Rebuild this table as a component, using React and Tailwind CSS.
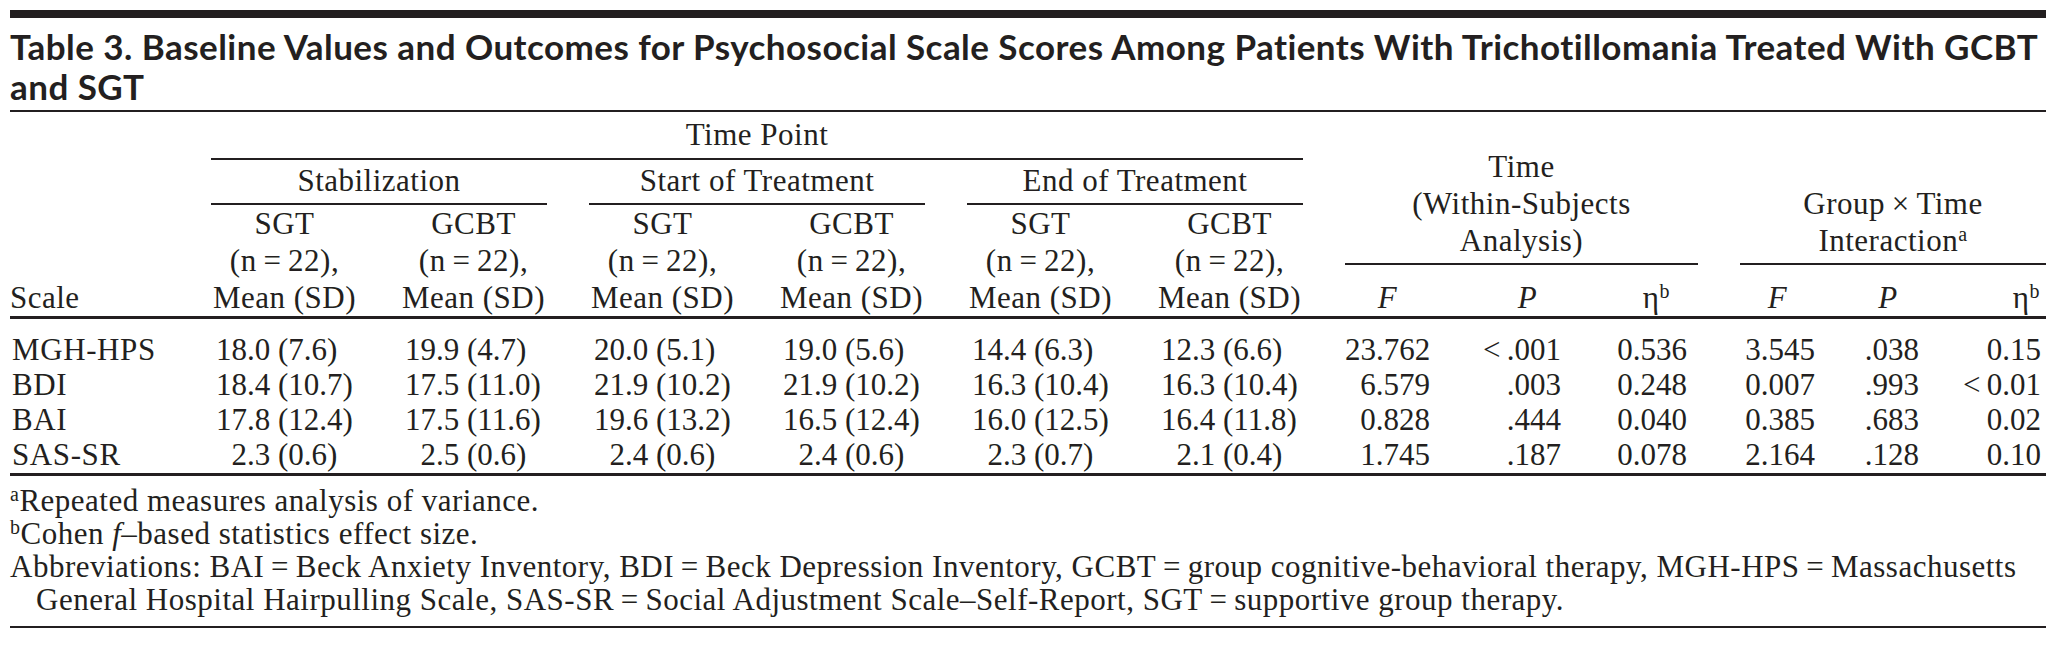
import React from "react";

const INK = "text-[#231f20]";
const GRID =
  "grid grid-cols-[159px_repeat(6,147px)_85px_89px_95px_75px_62px_85px] gap-x-[42px]";

const rows = [
  {
    scale: "MGH-HPS",
    means: ["18.0 (7.6)", "19.9 (4.7)", "20.0 (5.1)", "19.0 (5.6)", "14.4 (6.3)", "12.3 (6.6)"],
    time: ["23.762", "<\u2009.001", "0.536"],
    inter: ["3.545", ".038", "0.15"],
  },
  {
    scale: "BDI",
    means: ["18.4 (10.7)", "17.5 (11.0)", "21.9 (10.2)", "21.9 (10.2)", "16.3 (10.4)", "16.3 (10.4)"],
    time: ["6.579", ".003", "0.248"],
    inter: ["0.007", ".993", "<\u20090.01"],
  },
  {
    scale: "BAI",
    means: ["17.8 (12.4)", "17.5 (11.6)", "19.6 (13.2)", "16.5 (12.4)", "16.0 (12.5)", "16.4 (11.8)"],
    time: ["0.828", ".444", "0.040"],
    inter: ["0.385", ".683", "0.02"],
  },
  {
    scale: "SAS-SR",
    means: ["2.3 (0.6)", "2.5 (0.6)", "2.4 (0.6)", "2.4 (0.6)", "2.3 (0.7)", "2.1 (0.4)"],
    time: ["1.745", ".187", "0.078"],
    inter: ["2.164", ".128", "0.10"],
  },
];

function MeanVal({ v }) {
  const pad = v.indexOf(".") === 1;
  return (
    <div className="pl-[5px] whitespace-nowrap">
      {pad && <span className="invisible">1</span>}
      {v}
    </div>
  );
}

function SubHead({ name }) {
  return (
    <div className="text-center whitespace-nowrap">
      <div>{name}</div>
      <div>(n{"\u2009=\u2009"}22),</div>
      <div>Mean (SD)</div>
    </div>
  );
}

export default function App() {
  return (
    <div
      className={`bg-white w-[2064px] h-[652px] pt-[10px] pl-[10px] ${INK}`}
      style={{ fontFamily: '"Liberation Serif", "Times New Roman", serif' }}
    >
      <div className="w-[2036px]">
        {/* top bar */}
        <div className="h-[8px] bg-[#231f20]" />

        {/* title */}
        <div
          className="pt-[8px] pb-[4px] border-b-2 border-[#231f20] text-[35px] leading-[40px] font-bold tracking-[0.45px]"
          style={{ fontFamily: 'Lato, "Open Sans", sans-serif' }}
        >
          <div className="whitespace-nowrap">
            Table 3. Baseline Values and Outcomes for Psychosocial Scale Scores Among Patients With Trichotillomania Treated With GCBT
          </div>
          <div>and SGT</div>
        </div>

        {/* header */}
        <div className="flex items-end gap-x-[42px] border-b-[3px] border-[#231f20] text-[31px] leading-[37px] tracking-[0.5px]">
          <div className="grid grid-cols-[159px_repeat(6,147px)] gap-x-[42px]">
            <div className="col-start-2 col-span-6 border-b-2 border-[#231f20] pt-[4px] pb-[5px] text-center">
              Time Point
            </div>
            <div className="col-start-1 row-start-2" />
            <div className="col-start-2 row-start-2 col-span-2 border-b-2 border-[#231f20] pt-[2px] pb-[4px] text-center whitespace-nowrap">
              Stabilization
            </div>
            <div className="row-start-2 col-span-2 border-b-2 border-[#231f20] pt-[2px] pb-[4px] text-center whitespace-nowrap">
              Start of Treatment
            </div>
            <div className="row-start-2 col-span-2 border-b-2 border-[#231f20] pt-[2px] pb-[4px] text-center whitespace-nowrap">
              End of Treatment
            </div>
            <div className="col-start-1 row-start-3 self-end">Scale</div>
            <SubHead name="SGT" />
            <SubHead name="GCBT" />
            <SubHead name="SGT" />
            <SubHead name="GCBT" />
            <SubHead name="SGT" />
            <SubHead name="GCBT" />
          </div>

          <div className="w-[353px] flex flex-col">
            <div className="border-b-2 border-[#231f20] pb-[4px] text-center whitespace-nowrap">
              <div>Time</div>
              <div>(Within-Subjects</div>
              <div>Analysis)</div>
            </div>
            <div className="grid grid-cols-[85px_89px_95px] gap-x-[42px] pt-[14px]">
              <div className="text-center italic">F</div>
              <div className="text-center italic pl-[22px]">P</div>
              <div className="text-right pr-[28px]">
                η<sup className="text-[20px]">b</sup>
              </div>
            </div>
          </div>

          <div className="w-[306px] flex flex-col">
            <div className="border-b-2 border-[#231f20] pb-[4px] text-center whitespace-nowrap">
              <div>Group{"\u2009×\u2009"}Time</div>
              <div>
                Interaction<sup className="text-[20px]">a</sup>
              </div>
            </div>
            <div className="grid grid-cols-[75px_62px_85px] gap-x-[42px] pt-[14px]">
              <div className="text-center italic">F</div>
              <div className="text-center italic">P</div>
              <div className="text-right pr-[6px]">
                η<sup className="text-[20px]">b</sup>
              </div>
            </div>
          </div>
        </div>

        {/* body */}
        <div className={`${GRID} border-b-[3px] border-[#231f20] pt-[13px] pb-[1px] text-[31px] leading-[35px]`}>
          {rows.map((r) => (
            <React.Fragment key={r.scale}>
              <div className="pl-[2px] whitespace-nowrap tracking-[0.6px]">{r.scale}</div>
              {r.means.map((m, i) => (
                <MeanVal key={i} v={m} />
              ))}
              <div className="text-right">{r.time[0]}</div>
              <div className="text-right">{r.time[1]}</div>
              <div className="text-right pr-[11px]">{r.time[2]}</div>
              <div className="text-right">{r.inter[0]}</div>
              <div className="text-right">{r.inter[1]}</div>
              <div className="text-right pr-[5px]">{r.inter[2]}</div>
            </React.Fragment>
          ))}
        </div>

        {/* footnotes */}
        <div className="border-b-2 border-[#231f20] pt-[8px] pb-[10px] text-[31px] leading-[33px] tracking-[0.5px]">
          <div>
            <sup className="text-[20px]">a</sup>Repeated measures analysis of variance.
          </div>
          <div>
            <sup className="text-[20px]">b</sup>Cohen <span className="italic">f</span>–based statistics effect size.
          </div>
          <div className="whitespace-nowrap">
            Abbreviations: BAI{"\u2009=\u2009"}Beck Anxiety Inventory, BDI{"\u2009=\u2009"}Beck Depression Inventory, GCBT{"\u2009=\u2009"}group cognitive-behavioral therapy, MGH-HPS{"\u2009=\u2009"}Massachusetts
          </div>
          <div className="pl-[26px] whitespace-nowrap">
            General Hospital Hairpulling Scale, SAS-SR{"\u2009=\u2009"}Social Adjustment Scale–Self-Report, SGT{"\u2009=\u2009"}supportive group therapy.
          </div>
        </div>
      </div>
    </div>
  );
}
